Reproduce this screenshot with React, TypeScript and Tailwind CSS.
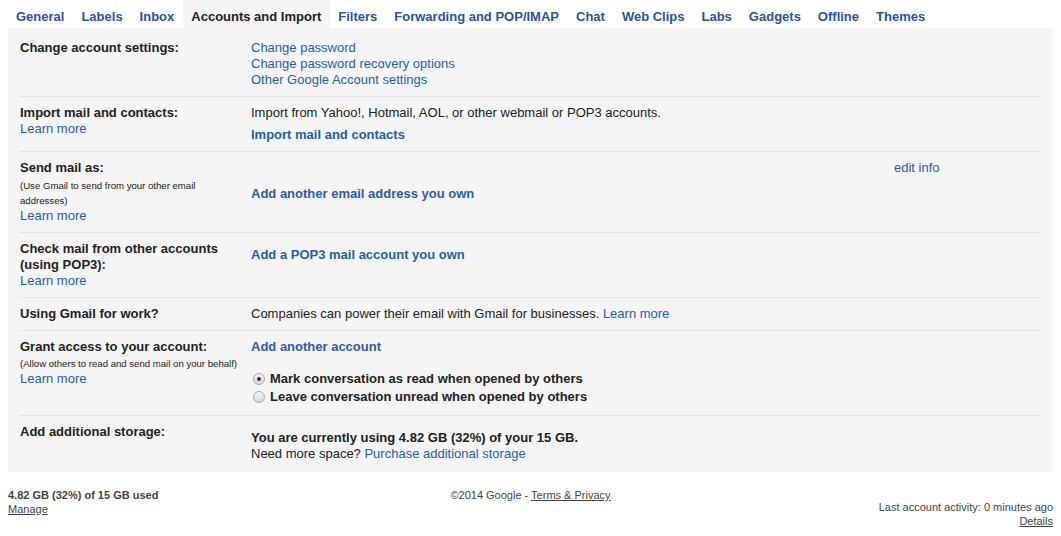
import React from "react";

const tabs = [
  "General",
  "Labels",
  "Inbox",
  "Accounts and Import",
  "Filters",
  "Forwarding and POP/IMAP",
  "Chat",
  "Web Clips",
  "Labs",
  "Gadgets",
  "Offline",
  "Themes",
];

function Link({ children, bold }: { children: React.ReactNode; bold?: boolean }) {
  return (
    <a className={"cursor-pointer text-[#2a5db0] " + (bold ? "font-bold" : "")}>{children}</a>
  );
}

function Radio({ checked }: { checked?: boolean }) {
  return (
    <span className="ml-[2px] mr-[5px] inline-flex h-[12px] w-[12px] items-center justify-center rounded-full border border-[#a9a9a9] bg-gradient-to-b from-[#f4f4f4] to-[#d8d8d8]">
      {checked && <span className="h-[4px] w-[4px] rounded-full bg-[#333]" />}
    </span>
  );
}

export default function App() {
  return (
    <div className="min-h-[536px] w-[1061px] bg-white text-[13px] leading-[16px] text-[#222]" style={{ fontFamily: '"Liberation Sans", Arial, sans-serif' }}>
      {/* Tabs */}
      <div className="flex h-[28px] pl-[8px]">
        {tabs.map((t) => (
          <div
            key={t}
            className={
              "h-[28px] pl-[8px] pr-[9px] pt-[5px] text-[13px] font-bold leading-[23px] " +
              (t === "Accounts and Import" ? "bg-[#f5f5f5] text-[#222]" : "text-[#2d53a0]")
            }
          >
            {t}
          </div>
        ))}
      </div>

      {/* Panel */}
      <div className="mx-[8px] bg-[#f5f5f5] px-[12px]">
        {/* Row 1 */}
        <div className="flex border-b border-[#e5e5e5] pb-[8px] pt-[12px]">
          <div className="w-[231px] shrink-0 pr-[4px] font-bold">Change account settings:</div>
          <div className="flex flex-col">
            <Link>Change password</Link>
            <Link>Change password recovery options</Link>
            <Link>Other Google Account settings</Link>
          </div>
        </div>

        {/* Row 2 */}
        <div className="flex border-b border-[#e5e5e5] pb-[8px] pt-[8px]">
          <div className="flex w-[231px] shrink-0 flex-col pr-[4px]">
            <span className="font-bold">Import mail and contacts:</span>
            <Link>Learn more</Link>
          </div>
          <div className="flex flex-col">
            <span>Import from Yahoo!, Hotmail, AOL, or other webmail or POP3 accounts.</span>
            <div className="mt-[6px]">
              <Link bold>Import mail and contacts</Link>
            </div>
          </div>
        </div>

        {/* Row 3 */}
        <div className="flex border-b border-[#e5e5e5] pb-[8px] pt-[8px]">
          <div className="flex w-[231px] shrink-0 flex-col pr-[4px]">
            <span className="font-bold">Send mail as:</span>
            <span className="mt-[2px] text-[9.6px] leading-[15px] text-[#222]">
              (Use Gmail to send from your other email
              <br />
              addresses)
            </span>
            <Link>Learn more</Link>
          </div>
          <div className="flex-1 pt-[26px]">
            <Link bold>Add another email address you own</Link>
          </div>
          <div className="w-[147px] shrink-0">
            <Link>edit info</Link>
          </div>
        </div>

        {/* Row 4 */}
        <div className="flex border-b border-[#e5e5e5] pb-[8px] pt-[8px]">
          <div className="flex w-[231px] shrink-0 flex-col pr-[4px]">
            <span className="font-bold">Check mail from other accounts (using POP3):</span>
            <Link>Learn more</Link>
          </div>
          <div className="pt-[6px]">
            <Link bold>Add a POP3 mail account you own</Link>
          </div>
        </div>

        {/* Row 5 */}
        <div className="flex border-b border-[#e5e5e5] pb-[8px] pt-[8px]">
          <div className="w-[231px] shrink-0 pr-[4px] font-bold">Using Gmail for work?</div>
          <div>
            Companies can power their email with Gmail for businesses. <Link>Learn more</Link>
          </div>
        </div>

        {/* Row 6 */}
        <div className="flex border-b border-[#e5e5e5] pb-[9px] pt-[8px]">
          <div className="flex w-[231px] shrink-0 flex-col pr-[4px]">
            <span className="font-bold">Grant access to your account:</span>
            <span className="mt-[1px] text-[9.6px] leading-[15px] text-[#222]">
              (Allow others to read and send mail on your behalf)
            </span>
            <Link>Learn more</Link>
          </div>
          <div className="flex flex-col">
            <Link bold>Add another account</Link>
            <div className="mt-[15px] flex h-[18px] items-center font-bold">
              <Radio checked />
              Mark conversation as read when opened by others
            </div>
            <div className="flex h-[18px] items-center font-bold">
              <Radio />
              Leave conversation unread when opened by others
            </div>
          </div>
        </div>

        {/* Row 7 */}
        <div className="flex pb-[10px] pt-[8px]">
          <div className="w-[231px] shrink-0 pr-[4px] font-bold">Add additional storage:</div>
          <div className="flex flex-col pt-[6px]">
            <span className="font-bold">You are currently using 4.82 GB (32%) of your 15 GB.</span>
            <span>
              Need more space? <Link>Purchase additional storage</Link>
            </span>
          </div>
        </div>
      </div>

      {/* Footer */}
      <div className="flex justify-between px-[8px] pt-[16px] text-[11px] leading-[14px] text-[#444]">
        <div className="flex w-[300px] flex-col">
          <span className="font-bold text-[#444]">4.82 GB (32%) of 15 GB used</span>
          <a className="w-fit cursor-pointer underline">Manage</a>
        </div>
        <div className="text-center">
          ©2014 Google - <a className="cursor-pointer underline">Terms &amp; Privacy</a>
        </div>
        <div className="flex w-[300px] flex-col items-end pt-[12px]">
          <span>Last account activity: 0 minutes ago</span>
          <a className="cursor-pointer underline">Details</a>
        </div>
      </div>
    </div>
  );
}
